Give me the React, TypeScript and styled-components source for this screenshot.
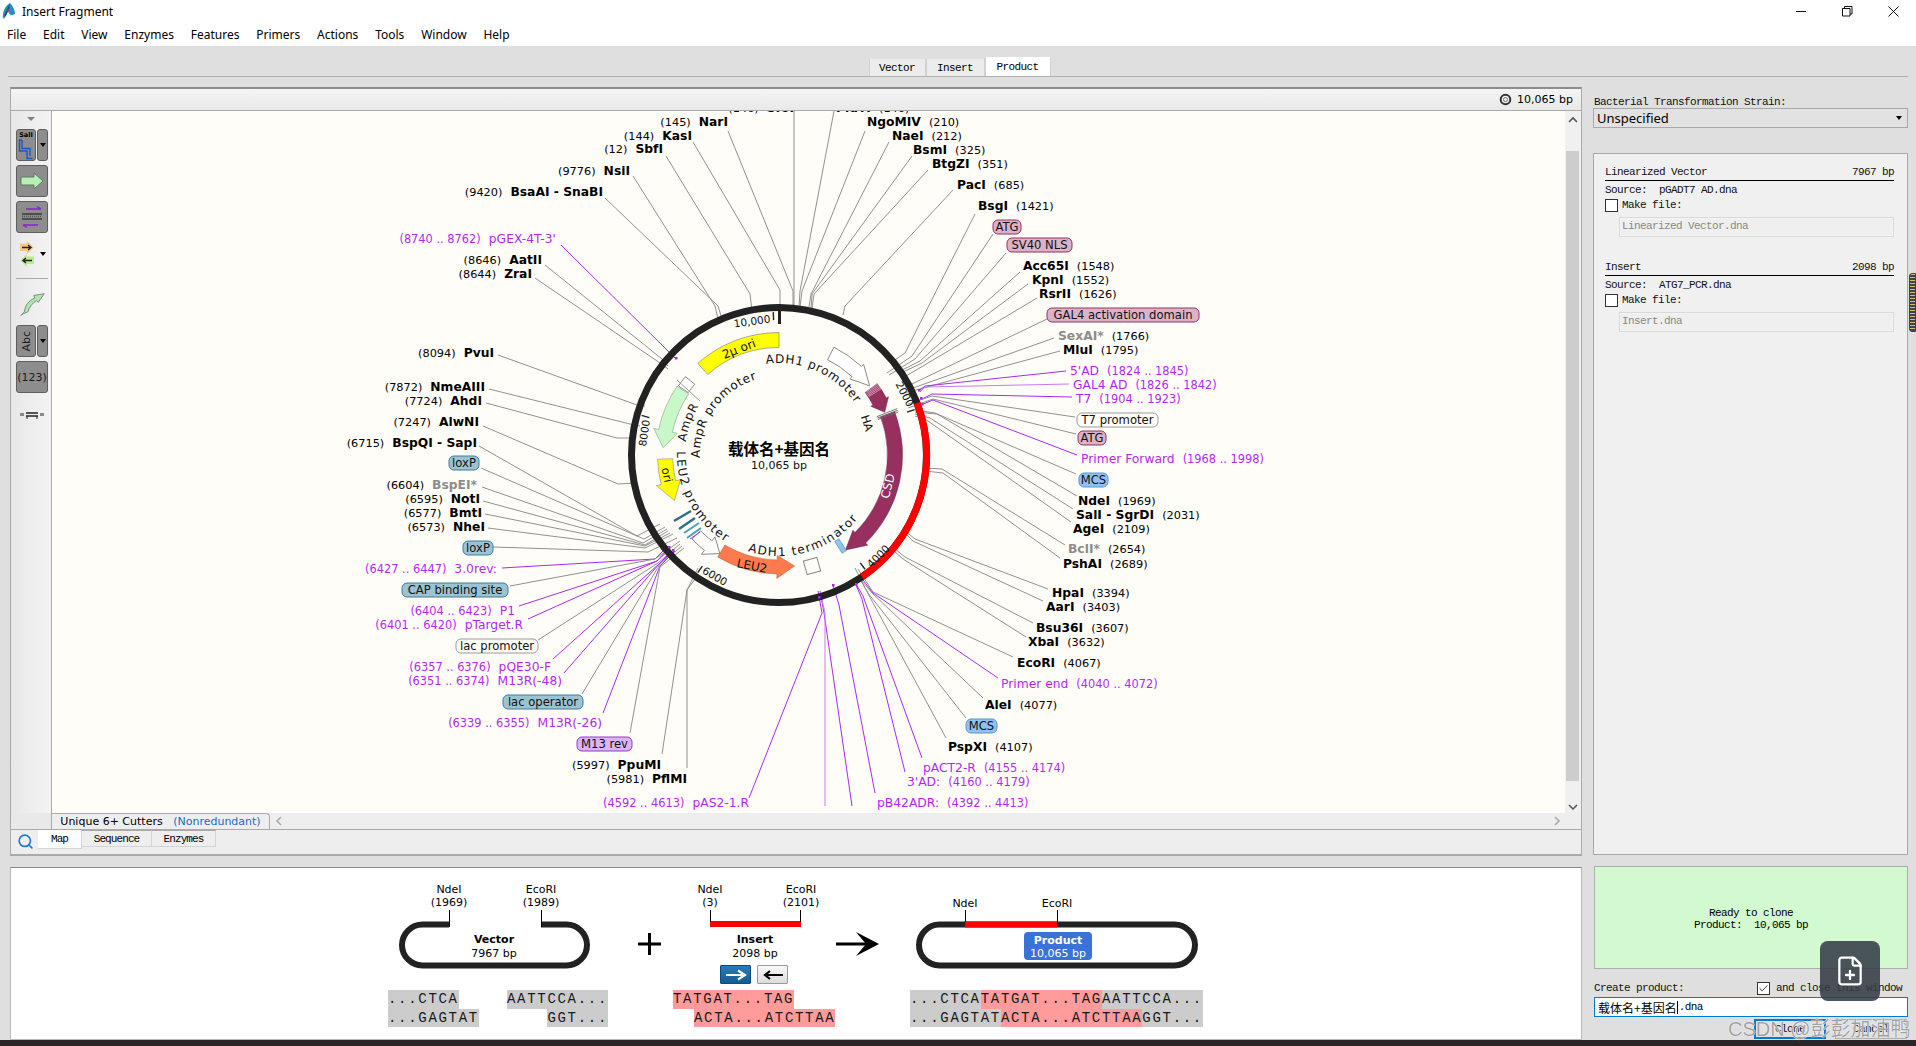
import React from 'react';
import styled, { createGlobalStyle } from 'styled-components';
import { Check, FilePlus, Search } from 'lucide-react';

const UI = `"Noto Sans", "Liberation Sans", sans-serif`;
const MAP = `"DejaVu Sans", "Noto Sans CJK SC", sans-serif`;
const BITMAP = `"Liberation Mono", "Noto Sans CJK SC", monospace`;

const Global = createGlobalStyle`
  html, body { margin: 0; padding: 0; overflow: hidden; background: #dfdfdf; }
  * { box-sizing: border-box; }
`;

const Page = styled.div`
  position: relative; width: 1916px; height: 1046px; overflow: hidden;
  display: flex; flex-direction: column; background: #dfdfdf; font-family: ${UI}; color: #000;
`;
const TitleBar = styled.div`
  height: 23px; background: #fff; display: flex; align-items: center; padding-left: 2px; flex: none;
`;
const TitleText = styled.span`font-size: 12px; margin-left: 6px;`;
const WindowButtons = styled.div`margin-left: auto; display: flex; height: 20px; margin-right: 0;`;
const WindowButton = styled.div`width: 46px; display: flex; align-items: center; justify-content: center;`;
const MenuBar = styled.div`
  height: 23px; background: #fff; display: flex; align-items: center; gap: 16.8px; padding-left: 7px; flex: none; font-size: 12px;
`;
const TabRow = styled.div`
  height: 31px; flex: none; margin: 0 8px; border-bottom: 1px solid #b0b0b0;
  display: flex; justify-content: center; align-items: flex-end; padding-left: 3px;
`;
const TopTab = styled.div<{ $active?: boolean; $w: number }>`
  width: ${p => p.$w}px; height: ${p => (p.$active ? 19 : 17)}px;
  font: 11px ${BITMAP}; letter-spacing: -0.6px; display: flex; align-items: center; justify-content: center;
  background: ${p => (p.$active ? '#fff' : '#ececec')};
  border-right: 1px solid #d2d2d2; border-left: 1px solid #d2d2d2;
`;
const Workspace = styled.div`display: flex; flex: 1; min-height: 0; padding: 10px 8px 0 10px; gap: 11px;`;
const LeftColumn = styled.div`width: 1572px; display: flex; flex-direction: column; flex: none;`;
const RightColumn = styled.div`flex: 1; display: flex; flex-direction: column; min-width: 0;`;
const MapPanel = styled.div`
  height: 769px; flex: none; display: flex; flex-direction: column; background: #eee;
  border-top: 2px solid #8d8d8d; border-left: 1px solid #aaa; border-right: 1px solid #aaa; border-bottom: 2px solid #aaa;
`;
const MapHeader = styled.div`
  height: 22px; flex: none; display: flex; align-items: center; justify-content: flex-end; gap: 5px; padding-right: 8px;
  background: linear-gradient(#f4f4f4, #e9e9e9); border-bottom: 1px solid #aaa;
  font: 11px ${MAP};
`;
const MapBody = styled.div`display: flex; height: 702px; flex: none;`;
const Toolbar = styled.div`
  width: 41px; flex: none; display: flex; flex-direction: column; align-items: flex-start; padding: 6px 0 0 5px;
  background: linear-gradient(90deg, #e8e8e8, #f3f3f3); border-right: 1px solid #aaa;
`;
const MenuCaret = styled.div`
  width: 0; height: 0; margin: 0 0 8px 11px; border-left: 4px solid transparent; border-right: 4px solid transparent; border-top: 4px solid #808080;
`;
const ToolRow = styled.div`display: flex; gap: 1px; margin-bottom: 4px; align-items: center;`;
const ToolButton = styled.div<{ $w?: number }>`
  width: ${p => p.$w ?? 32}px; height: 32px; flex: none; background: #8d8d8d; border: 1px solid #5f5f5f; border-radius: 3px;
  display: flex; align-items: center; justify-content: center; font: 11px ${MAP}; color: #1c1c1c;
`;
const SideCaret = styled.div`
  width: 0; height: 0; border-left: 3px solid transparent; border-right: 3px solid transparent; border-top: 4px solid #000;
`;
const VerticalText = styled.span`writing-mode: vertical-rl; transform: rotate(180deg); font: 11px ${MAP};`;
const ToolSeparator = styled.div`width: 32px; height: 1px; background: #aaa; margin: 11px 0 10px;`;
const PlainTool = styled.div`display: flex; align-items: center; gap: 5px; margin: 4px 0 0;`;
const Canvas = styled.svg`flex: none; width: 1513px; height: 702px; display: block; background: #fffdf7;`;
const VScroll = styled.div`flex: 1; display: flex; flex-direction: column; align-items: center; background: #f0f0f0;`;
const VThumb = styled.div`width: 13px; height: 631px; margin: 25px 2px 20px 0; background: #cdcdcd;`;
const TabStrip = styled.div`height: 17px; flex: none; display: flex; border-bottom: 1px solid #aaa; background: #eee;`;
const StripSpacer = styled.div`width: 41px; flex: none; border-right: 1px solid #aaa; background: #e9e9e9;`;
const CutterTab = styled.div`
  width: 218px; flex: none; display: flex; align-items: center; justify-content: center; gap: 7px; font: 11px ${MAP};
  border: 1px solid #aaa; border-left: none; border-bottom: none; border-top-right-radius: 4px; white-space: pre;
`;
const Blue = styled.span`color: #2469c8;`;
const HScroll = styled.div`flex: 1; display: flex; align-items: center; justify-content: space-between; padding: 0 20px 0 5px;`;
const ViewTabs = styled.div`flex: 1; display: flex; align-items: flex-start; padding-left: 6px; background: #eee;`;
const ViewTabIcon = styled.div`width: 21px; height: 20px; display: flex; align-items: center; padding-top: 2px;`;
const ViewTab = styled.div<{ $active?: boolean; $w: number }>`
  width: ${p => p.$w}px; height: ${p => (p.$active ? 19 : 17)}px; flex: none;
  display: flex; align-items: center; justify-content: center;
  font: 11px ${BITMAP}; letter-spacing: -0.9px;
  background: ${p => (p.$active ? '#fff' : '#eee')};
  border-right: 1px solid #d4d4d4; border-bottom: 1px solid #d4d4d4; border-top: ${p => (p.$active ? 'none' : '1px solid #aaa')};
`;
const CloningPanel = styled.div`
  margin-top: 11px; height: 173px; flex: none; background: #fff; border: 1px solid #b8b8b8; border-top-color: #888;
  padding: 12px 0 0 377px; display: grid; grid-template-columns: 220px 65px 162px 75px 292px; align-items: start;
`;
const CloneColumn = styled.div`display: flex; flex-direction: column;`;
const Schematic = styled.svg<{ $w: number; $h: number }>`width: ${p => p.$w}px; height: ${p => p.$h}px; display: block; overflow: visible;`;
const SchematicLabel = styled.text<{ $bold?: boolean; $light?: boolean }>`
  font: ${p => (p.$bold ? 'bold ' : '')}11px ${MAP}; text-anchor: middle; fill: ${p => (p.$light ? '#fff' : '#000')};
`;
const OrientButtons = styled.div`display: flex; gap: 6px; justify-content: center; height: 20px; margin-bottom: 5px;`;
const OrientButton = styled.div<{ $on?: boolean }>`
  width: 31px; height: 19px; display: flex; align-items: center; justify-content: center; border-radius: 1px;
  background: ${p => (p.$on ? 'linear-gradient(#2a7ab8, #125c94)' : 'linear-gradient(#f8f8f8, #dcdcdc)')};
  border: 1px solid ${p => (p.$on ? '#0f4c7c' : '#9a9a9a')};
`;
const SeqBlock = styled.div`display: flex; flex-direction: column; margin-top: 5px;`;
const InsertSeq = styled(SeqBlock)`margin-top: 0;`;
const SeqRow = styled.div<{ $split?: boolean; $indent?: number }>`
  display: flex; height: 18.5px; justify-content: ${p => (p.$split ? 'space-between' : 'flex-start')}; margin-left: ${p => p.$indent ?? 0}px;
`;
const SeqChunk = styled.span<{ $red?: boolean }>`
  font: 14px/18.5px "Liberation Mono", monospace; letter-spacing: 1.7px; white-space: pre;
  background: ${p => (p.$red ? '#ff9b9b' : '#cccccc')}; color: #1a1a1a;
`;
const BitmapLabel = styled.div`font: 11px ${BITMAP}; letter-spacing: -0.6px; white-space: pre; color: #111;`;
const StrainLabel = styled(BitmapLabel)`height: 21px; padding: 9px 0 0 1px; line-height: 12px;`;
const StrainSelect = styled.div`
  height: 20px; flex: none; border: 1px solid #a8a8a8; display: flex; align-items: center; justify-content: space-between;
  padding: 0 5px 0 3px; font-size: 13px; background: #e2e2e2;
`;
const SourcesBox = styled.div`
  height: 702px; flex: none; margin-top: 25px; border: 1px solid #a8a8a8; background: #f0f0f0; padding: 11px 13px 0 11px;
`;
const SourceHead = styled(BitmapLabel)`
  display: flex; justify-content: space-between; height: 16px; line-height: 15px; border-bottom: 1px solid #000;
`;
const SourceLine = styled(BitmapLabel)`height: 16px; line-height: 18px;`;
const MakeFile = styled(BitmapLabel)`display: flex; align-items: center; gap: 4px; height: 16px;`;
const CheckBox = styled.div`
  width: 13px; height: 13px; flex: none; background: #fff; border: 1px solid #333; display: flex; align-items: center; justify-content: center;
`;
const FileField = styled(BitmapLabel)`
  height: 20px; margin: 4px 0 23px 14px; border: 1px solid #d9d9d9; background: #efefef; padding-left: 2px; line-height: 17px; color: #888;
  box-shadow: inset 0 0 0 1px #f4f4f4;
`;
const ReadyBox = styled.div`
  margin-top: 11px; height: 103px; flex: none; background: #d2f9d0; border: 1px solid #adadad; padding-top: 2px;
  display: flex; flex-direction: column; align-items: center; justify-content: center; margin-left: 1px;
`;
const ReadyLine = styled(BitmapLabel)`line-height: 12px; color: #000;`;
const CreateRow = styled(BitmapLabel)`
  display: flex; align-items: center; justify-content: space-between; height: 16px; margin: 11px 0 1px 1px; padding-right: 6px;
`;
const CloseOption = styled.div`display: flex; align-items: center; gap: 6px;`;
const NameField = styled.div`
  height: 20px; flex: none; margin-left: 1px; background: #fff; border: 1px solid #0078d7; display: flex; align-items: center; padding-left: 3px;
  font: 12px "Noto Sans CJK SC", sans-serif;
`;
const FieldExt = styled.span`font: 11px ${BITMAP}; letter-spacing: -0.6px; margin-left: 1px;`;
const Caret = styled.span`width: 1px; height: 13px; background: #000; margin-left: 0;`;
const DialogButtons = styled.div`display: flex; justify-content: flex-end; gap: 9px; margin-top: 2px; padding-right: 1px;`;
const DialogButton = styled(BitmapLabel)<{ $primary?: boolean }>`
  width: 72px; height: 20px; display: flex; align-items: center; justify-content: center;
  border: ${p => (p.$primary ? '2px solid #0078d7' : '1px solid #adadad')}; background: #e1e1e1;
`;
const Taskbar = styled.div`height: 6px; flex: none; background: #2a2529; margin-top: auto;`;
const FloatingAction = styled.div`
  position: absolute; left: 1820px; top: 941px; width: 60px; height: 60px; border-radius: 8px; background: rgba(52, 60, 70, 0.88);
  display: flex; align-items: center; justify-content: center; color: #fff;
`;
const Watermark = styled.div`
  position: absolute; left: 1728px; top: 1013px; font: 20px "Liberation Sans", "Noto Sans CJK SC", sans-serif;
  color: rgba(125, 125, 125, 0.72); white-space: nowrap; text-shadow: 0 0 1px #fff, 0 0 1px #fff;
`;
const EdgeWidget = styled.div`
  position: absolute; left: 1909px; top: 273px; width: 7px; height: 59px; border-radius: 3px 0 0 3px; border: 1px solid #3a4350;
  background: repeating-linear-gradient(#d8c05a 0 1px, #3a4350 1px 3px);
`;

const Enzyme = styled.text<{ $end?: boolean }>`
  font: 11.3px ${MAP}; fill: #000; text-anchor: ${p => (p.$end ? 'end' : 'start')};
`;
const Bold = styled.tspan<{ $grey?: boolean }>`font-weight: bold; font-size: 12.3px; fill: ${p => (p.$grey ? '#8c8c8c' : '#000')};`;
const Primer = styled.text<{ $end?: boolean }>`
  font: 11.4px ${MAP}; fill: #b428f5; text-anchor: ${p => (p.$end ? 'end' : 'start')};
`;
const PrimerName = styled.tspan`font-size: 12.3px;`;
const FeatureBox = styled.rect<{ $fill: string; $edge: string }>`fill: ${p => p.$fill}; stroke: ${p => p.$edge}; stroke-width: 1;`;
const FeatureText = styled.text`font: 11.6px ${MAP}; fill: #111; text-anchor: middle;`;
const RingText = styled.text<{ $fill?: string; $size?: number }>`
  font: ${p => p.$size ?? 10.5}px ${MAP}; fill: ${p => p.$fill ?? '#111'}; text-anchor: middle;
`;
const ArcText = styled.text<{ $spread?: number }>`font: 12px ${MAP}; fill: #111; letter-spacing: ${p => p.$spread ?? 0.7}px;`;
const PlasmidName = styled.text`font: bold 15.5px "Noto Sans CJK SC", sans-serif; fill: #000; text-anchor: middle;`;
const LeaderLine = styled.polyline<{ $c: string }>`
  fill: none; stroke: ${p => ({ g: '#919191', p: '#a928f5', l: '#c47cf5' } as Record<string, string>)[p.$c]}; stroke-width: 1;
`;
const PrimerTick = styled.rect`fill: #a928f5;`;

const CX = 779, CY = 454;
const pt = (r: number, a: number) => {
  const t = (a * Math.PI) / 180;
  return [CX + r * Math.sin(t), CY - r * Math.cos(t)];
};
const f = (p: number[]) => `${p[0].toFixed(1)} ${p[1].toFixed(1)}`;
const arc = (r: number, a1: number, a2: number) =>
  `M${f(pt(r, a1))} A${r} ${r} 0 ${Math.abs(a2 - a1) > 180 ? 1 : 0} ${a2 > a1 ? 1 : 0} ${f(pt(r, a2))}`;
const arrowPath = (r: number, w: number, hw: number, a1: number, base: number, tip: number) => {
  const s = base > a1 ? 1 : 0;
  const ro = r + w / 2, ri = r - w / 2;
  return `M${f(pt(ro, a1))} A${ro} ${ro} 0 0 ${s} ${f(pt(ro, base))} L${f(pt(r + hw / 2, base))} L${f(pt(r, tip))} L${f(pt(r - hw / 2, base))} L${f(pt(ri, base))} A${ri} ${ri} 0 0 ${1 - s} ${f(pt(ri, a1))} Z`;
};

type Lab = [string, string, number, number, boolean?];
const leftEnzymes: Lab[] = [
  ['SfoI', '146', 794, 108], ['NarI', '145', 728, 122], ['KasI', '144', 692, 136], ['SbfI', '12', 663, 149],
  ['NsiI', '9776', 630, 171], ['BsaAI - SnaBI', '9420', 603, 192], ['AatII', '8646', 542, 260], ['ZraI', '8644', 532, 274],
  ['PvuI', '8094', 494, 353], ['NmeAIII', '7872', 485, 387], ['AhdI', '7724', 482, 401], ['AlwNI', '7247', 479, 422],
  ['BspQI - SapI', '6715', 477, 443], ['BspEI*', '6604', 477, 485, true], ['NotI', '6595', 480, 499], ['BmtI', '6577', 482, 513],
  ['NheI', '6573', 485, 527], ['PpuMI', '5997', 661, 765], ['PflMI', '5981', 687, 779],
];
const rightEnzymes: Lab[] = [
  ['PluTI', '146', 836, 108], ['NgoMIV', '210', 867, 122], ['NaeI', '212', 892, 136], ['BsmI', '325', 913, 150], ['BtgZI', '351', 932, 164],
  ['PacI', '685', 957, 185], ['BsgI', '1421', 978, 206], ['Acc65I', '1548', 1023, 266], ['KpnI', '1552', 1032, 280], ['RsrII', '1626', 1039, 294],
  ['SexAI*', '1766', 1058, 336, true], ['MluI', '1795', 1063, 350], ['NdeI', '1969', 1078, 501], ['SalI - SgrDI', '2031', 1076, 515],
  ['AgeI', '2109', 1073, 529], ['BclI*', '2654', 1068, 549, true], ['PshAI', '2689', 1063, 564], ['HpaI', '3394', 1052, 593], ['AarI', '3403', 1046, 607],
  ['Bsu36I', '3607', 1036, 628], ['XbaI', '3632', 1028, 642], ['EcoRI', '4067', 1017, 663], ['AleI', '4077', 985, 705], ['PspXI', '4107', 948, 747],
];
const leftPrimers: [string, string, number, number][] = [
  ["pGEX-4T-3'", '8740 .. 8762', 556, 239], ['3.0rev:', '6427 .. 6447', 497, 569], ['P1', '6404 .. 6423', 515, 611], ['pTarget.R', '6401 .. 6420', 523, 625],
  ['pQE30-F', '6357 .. 6376', 551, 667], ['M13R(-48)', '6351 .. 6374', 562, 681], ['M13R(-26)', '6339 .. 6355', 602, 723], ['pAS2-1.R', '4592 .. 4613', 749, 803],
];
const rightPrimers: [string, string, number, number][] = [
  ["5'AD", '1824 .. 1845', 1070, 371], ['GAL4 AD', '1826 .. 1842', 1073, 385], ['T7', '1904 .. 1923', 1076, 399], ['Primer Forward', '1968 .. 1998', 1081, 459],
  ['Primer end', '4040 .. 4072', 1001, 684], ['pACT2-R', '4155 .. 4174', 923, 768], ["3'AD:", '4160 .. 4179', 907, 782], ['pB42ADR:', '4392 .. 4413', 877, 803],
];
const PINK = ['#dcb2c8', '#97305f'], TEAL = ['#9cc3d2', '#3a7f96'], PLAIN = ['#fffdf7', '#9a9a9a'], SKY = ['#8fc2f0', '#5a96d0'], LILAC = ['#dcb4f5', '#8a3fc0'];
const features: [string, number, number, number, string[]][] = [
  ['ATG', 993, 1021, 227, PINK], ['SV40 NLS', 1007, 1072, 245, PINK], ['GAL4 activation domain', 1047, 1199, 315, PINK],
  ['T7 promoter', 1077, 1158, 420, PLAIN], ['ATG', 1078, 1106, 438, PINK], ['MCS', 1079, 1108, 480, SKY], ['MCS', 966, 997, 726, SKY],
  ['loxP', 449, 479, 463, TEAL], ['loxP', 463, 493, 548, TEAL], ['CAP binding site', 402, 508, 590, TEAL], ['lac promoter', 456, 538, 646, PLAIN],
  ['lac operator', 503, 583, 702, TEAL], ['M13 rev', 577, 632, 744, LILAC],
];
const leaders: [string, number[]][] = [
  ['g', [794, 110, 794, 290, 794, 310]], ['g', [834, 110, 800, 290, 799, 306]], ['g', [865, 130, 802, 290, 800, 306]],
  ['g', [889, 141, 811, 293, 809, 306]], ['g', [912, 155, 812, 293, 811, 308]], ['g', [928, 169, 814, 293, 812, 308]],
  ['g', [953, 189, 845, 305, 843, 314]], ['g', [975, 213, 905, 352, 895, 359]], ['g', [993, 233, 912, 355, 887, 372]],
  ['g', [1006, 252, 915, 358, 889, 374]], ['g', [1020, 271, 920, 360, 902, 369]], ['g', [1028, 283, 922, 362, 903, 371]],
  ['g', [1037, 297, 923, 365, 906, 375]], ['g', [1047, 318, 914, 382, 905, 386]], ['g', [1054, 337, 913, 387, 906, 392]],
  ['g', [1060, 350, 912, 390, 906, 395]], ['p', [1066, 370, 925, 385, 919, 390]], ['l', [1069, 383, 925, 386, 920, 391]],
  ['p', [1072, 396, 932, 393, 922, 398]], ['g', [1075, 416, 932, 395, 908, 403]], ['g', [1076, 433, 933, 398, 908, 407]],
  ['p', [1077, 454, 933, 399, 923, 403]], ['g', [1076, 473, 935, 412, 915, 409]], ['g', [1077, 495, 937, 413, 915, 411]],
  ['g', [1073, 508, 930, 417, 915, 413]], ['g', [1071, 521, 928, 420, 915, 415]], ['g', [1065, 544, 942, 468, 925, 467]],
  ['g', [1060, 557, 943, 472, 925, 470]], ['g', [1048, 588, 915, 538, 905, 530]], ['g', [1043, 600, 913, 540, 905, 532]],
  ['g', [1033, 622, 905, 556, 895, 548]], ['g', [1026, 636, 903, 558, 894, 550]], ['g', [1013, 656, 873, 591, 858, 568]],
  ['p', [998, 677, 873, 592, 860, 575]], ['g', [983, 697, 872, 592, 862, 580]], ['g', [966, 717, 868, 592, 860, 578]],
  ['g', [946, 737, 865, 587, 855, 567]], ['p', [922, 757, 863, 595, 856, 583]], ['p', [905, 771, 862, 598, 856, 584]],
  ['p', [875, 792, 839, 604, 833, 584]], ['p', [852, 805, 824, 612, 820, 590]], ['l', [825, 805, 825, 612, 820, 590]],
  ['p', [749, 797, 822, 612, 818, 590]], ['g', [728, 130, 793, 290, 793, 310]], ['g', [693, 141, 780, 289, 780, 310]],
  ['g', [666, 155, 750, 293, 752, 310]], ['g', [633, 175, 715, 305, 718, 318]], ['g', [605, 197, 718, 305, 722, 318]],
  ['p', [561, 244, 668, 350, 675, 357]], ['g', [545, 264, 662, 358, 668, 365]], ['g', [535, 277, 660, 362, 668, 368]],
  ['g', [498, 354, 637, 404, 645, 405]], ['g', [489, 388, 630, 423, 640, 425]], ['g', [486, 402, 617, 437, 635, 437]],
  ['g', [483, 425, 618, 483, 636, 482]], ['g', [479, 445, 637, 535, 660, 523]], ['g', [481, 467, 644, 538, 665, 526]],
  ['g', [482, 486, 643, 542, 667, 528]], ['g', [483, 500, 645, 544, 668, 530]], ['g', [485, 513, 645, 545, 670, 532]],
  ['g', [488, 527, 645, 547, 673, 533]], ['g', [493, 546, 648, 551, 677, 537]], ['p', [502, 567, 655, 558, 668, 545]],
  ['g', [510, 585, 655, 558, 680, 540]], ['p', [519, 605, 657, 560, 668, 548]], ['p', [528, 618, 657, 560, 670, 548]],
  ['g', [538, 639, 658, 562, 680, 543]], ['p', [553, 658, 660, 562, 672, 550]], ['p', [564, 672, 660, 562, 674, 550]],
  ['g', [582, 693, 660, 563, 682, 545]], ['p', [603, 712, 660, 565, 675, 550]], ['g', [630, 732, 660, 566, 684, 547]],
  ['g', [662, 753, 687, 589, 695, 578]], ['g', [687, 767, 687, 589, 698, 567]],
];
const stripes = [54.2, 54.9, 55.6, 56.3, 57];
const ringTicks = [357.7, 286.1, 214.6, 143, 71.5];
const primerTicks = [[675, 356], [918, 388], [920, 396], [921, 402], [818, 595], [832, 583], [855, 582], [668, 545], [672, 548]];

const PlasmidMap = () => (
  <Canvas viewBox="52 110 1513 702">
    <defs>
      <path id="adhp" d={arc(92, -8, 60)} />
      <path id="ampr" d={arc(94, -82, -45)} />
      <path id="amprp" d={arc(79, -92, -10)} />
      <path id="leup" d={arc(102, 272, 190)} />
      <path id="adht" d={arc(101, 198, 120)} />
    </defs>
    {leaders.map(([c, p], i) => (
      <LeaderLine key={i} $c={c} points={p.join(' ')} />
    ))}
    <circle cx={CX} cy={CY} r={147.5} fill="none" stroke="#222" strokeWidth={7} />
    <path d={arc(147.5, 69.4, 145.7)} fill="none" stroke="#f00" strokeWidth={7} />
    {primerTicks.map(([x, y]) => <PrimerTick key={x + '-' + y} x={x} y={y} width={2.5} height={2.5} />)}
    {ringTicks.map(a => {
      const p1 = pt(143, a), p2 = pt(135, a);
      return <line key={a} x1={p1[0]} y1={p1[1]} x2={p2[0]} y2={p2[1]} stroke="#222" strokeWidth={1.4} />;
    })}
    <line x1={CX + 0.5} y1={310} x2={CX + 0.5} y2={323} stroke="#222" strokeWidth={3} />
    <RingText x={752} y={324} transform="rotate(-8 752 320)">10,000</RingText>
    <RingText x={644} y={436} transform="rotate(-82 644 432)">8000</RingText>
    <RingText x={715} y={579} transform="rotate(30 715 575)">6000</RingText>
    <RingText x={878} y={559} transform="rotate(-45 878 555)">4000</RingText>
    <RingText x={905} y={397} transform="rotate(62 905 393)">2000</RingText>

    <path d={arrowPath(115, 15, 15, 0, -41.5, -41.5)} fill="#ffff00" stroke="#777" strokeWidth={0.6} />
    <path d={arrowPath(114, 14, 20, 27, 43, 52.6)} fill="#fff" stroke="#8a8a8a" />
    <path d={arrowPath(114, 15, 20, 54, 62, 68)} fill="#97305f" stroke="#6d2245" strokeWidth={0.5} />
    {stripes.map(a => {
      const p1 = pt(107, a), p2 = pt(122, a);
      return <line key={a} x1={p1[0]} y1={p1[1]} x2={p2[0]} y2={p2[1]} stroke="#fff" strokeWidth={0.5} />;
    })}
    <path d={arrowPath(116, 15, 21, 69.5, 135.5, 145)} fill="#97305f" stroke="#6d2245" strokeWidth={0.5} />
    {[68.6, 69.4, 70.2].map(a => {
      const p1 = pt(105, a), p2 = pt(127, a);
      return <line key={a} x1={p1[0]} y1={p1[1]} x2={p2[0]} y2={p2[1]} stroke="#666" strokeWidth={0.9} />;
    })}
    <rect x={838} y={538} width={5} height={14} fill="#8cc4ee" stroke="#5a8cb8" strokeWidth={0.6} transform="rotate(-32 840.5 545)" />
    <rect x={805} y={558} width={14} height={14} fill="#fffdf7" stroke="#888" transform="rotate(-16 812 565)" />
    <path d={arrowPath(112, 14, 23, 211, 181, 172)} fill="#ff7a4d" stroke="#a85a3a" strokeWidth={0.5} />
    <path d={arrowPath(115, 12, 22, 226, 218, 211)} fill="#fff" stroke="#8a8a8a" />
    <path d={arrowPath(116, 14, 24, -56, -78, -86.4)} fill="#c8f7c8" stroke="#8aa08a" strokeWidth={0.6} />
    <path d={arrowPath(116, 12, 12, -50, -55.5, -55.5)} fill="#fff" stroke="#8a8a8a" />
    <line x1={677} y1={379} x2={700} y2={400} stroke="#999" />
    <path d={arrowPath(114, 15, 25, -92, -104, -113.5)} fill="#ffff00" stroke="#888" strokeWidth={0.6} />
    <line x1={674} y1={520} x2={691} y2={510} stroke="#2e6f88" strokeWidth={2.5} />
    <line x1={679} y1={528} x2={695} y2={517} stroke="#2e6f88" strokeWidth={2.5} />
    <line x1={684} y1={532} x2={699} y2={522} stroke="#4aa0b8" strokeWidth={2} />
    <line x1={687} y1={537} x2={701} y2={527} stroke="#4aa0b8" strokeWidth={2} />
    <line x1={690} y1={538} x2={700} y2={531} stroke="#a928f5" strokeWidth={1} />

    <RingText $size={12} x={739} y={352} transform="rotate(-21 739 348)">2µ ori</RingText>
    <RingText $size={12} $fill="#fff" x={888} y={489} transform="rotate(-76 888 485)">CSD</RingText>
    <RingText $size={11.5} x={667} y={478} transform="rotate(78 667 474)">ori</RingText>
    <RingText $size={12} x={752} y={569} transform="rotate(11 752 565)">LEU2</RingText>
    <RingText $size={11.5} x={867} y={426} transform="rotate(72 867 422)">HA</RingText>
    <ArcText><textPath href="#adhp">ADH1 promoter</textPath></ArcText>
    <ArcText><textPath href="#ampr">AmpR</textPath></ArcText>
    <ArcText><textPath href="#amprp">AmpR promoter</textPath></ArcText>
    <ArcText $spread={1.4}><textPath href="#leup">LEU2 promoter</textPath></ArcText>
    <ArcText $spread={1.4}><textPath href="#adht">ADH1 terminator</textPath></ArcText>
    <PlasmidName x={CX} y={454}>载体名+基因名</PlasmidName>
    <RingText $size={11} x={CX} y={468}>10,065 bp</RingText>

    {leftEnzymes.map(([n, p, x, y, g]) => (
      <Enzyme key={n} $end x={x} y={y + 3}>({p})<Bold $grey={g} dx={8}>{n}</Bold></Enzyme>
    ))}
    {rightEnzymes.map(([n, p, x, y, g]) => (
      <Enzyme key={n} x={x} y={y + 3}><Bold $grey={g}>{n}</Bold><tspan dx={8}>({p})</tspan></Enzyme>
    ))}
    {leftPrimers.map(([n, p, x, y]) => (
      <Primer key={n} $end x={x} y={y + 3}>({p})<PrimerName dx={8}>{n}</PrimerName></Primer>
    ))}
    {rightPrimers.map(([n, p, x, y]) => (
      <Primer key={n} x={x} y={y + 3}><PrimerName>{n}</PrimerName><tspan dx={8}>({p})</tspan></Primer>
    ))}
    {features.map(([n, x1, x2, y, c]) => (
      <g key={n + y}>
        <FeatureBox x={x1} y={y - 8} width={x2 - x1} height={14} rx={5} $fill={c[0]} $edge={c[1]} />
        <FeatureText x={(x1 + x2) / 2} y={y + 3}>{n}</FeatureText>
      </g>
    ))}
  </Canvas>
);

const Tick = ({ x, top, bottom }: { x: number; top: number; bottom: number }) => (
  <line x1={x} x2={x} y1={top} y2={bottom} stroke="#000" strokeWidth={1} />
);
const Stadium = ({ x1, x2 }: { x1: number; x2: number }) => (
  <rect x={x1} y={924.5} width={x2 - x1} height={41} rx={20.5} fill="#fff" stroke="#222" strokeWidth={6} />
);

const CloningDiagram = () => (
  <CloningPanel>
    <CloneColumn>
      <Schematic $w={220} $h={105} viewBox="388 880 220 105">
        <Stadium x1={402} x2={587} />
        <rect x={449} y={915} width={92} height={15} fill="#fff" />
        <Tick x={449.5} top={910} bottom={927} />
        <Tick x={541.5} top={910} bottom={927} />
        <SchematicLabel x={449} y={893}>NdeI</SchematicLabel>
        <SchematicLabel x={449} y={906}>(1969)</SchematicLabel>
        <SchematicLabel x={541} y={893}>EcoRI</SchematicLabel>
        <SchematicLabel x={541} y={906}>(1989)</SchematicLabel>
        <SchematicLabel $bold x={494} y={943}>Vector</SchematicLabel>
        <SchematicLabel x={494} y={957}>7967 bp</SchematicLabel>
      </Schematic>
      <SeqBlock>
        <SeqRow $split><SeqChunk>...CTCA</SeqChunk><SeqChunk>AATTCCA...</SeqChunk></SeqRow>
        <SeqRow $split><SeqChunk>...GAGTAT</SeqChunk><SeqChunk>GGT...</SeqChunk></SeqRow>
      </SeqBlock>
    </CloneColumn>
    <Schematic $w={65} $h={105} viewBox="608 880 65 105">
      <path d="M638 944H661M649.5 933V955" stroke="#000" strokeWidth={3} fill="none" />
    </Schematic>
    <CloneColumn>
      <Schematic $w={162} $h={85} viewBox="673 880 162 85">
        <rect x={710} y={921} width={91} height={6} fill="#f00" />
        <Tick x={710.5} top={910} bottom={922} />
        <Tick x={800.5} top={910} bottom={922} />
        <SchematicLabel x={710} y={893}>NdeI</SchematicLabel>
        <SchematicLabel x={710} y={906}>(3)</SchematicLabel>
        <SchematicLabel x={801} y={893}>EcoRI</SchematicLabel>
        <SchematicLabel x={801} y={906}>(2101)</SchematicLabel>
        <SchematicLabel $bold x={755} y={943}>Insert</SchematicLabel>
        <SchematicLabel x={755} y={957}>2098 bp</SchematicLabel>
      </Schematic>
      <OrientButtons>
        <OrientButton $on>
          <svg width="22" height="12" viewBox="0 0 22 12"><path d="M1 6H18M13 1.5L20 6L13 10.5" fill="none" stroke="#fff" strokeWidth="2.2" /></svg>
        </OrientButton>
        <OrientButton>
          <svg width="22" height="12" viewBox="0 0 22 12"><path d="M21 6H5M8 2L3 6L8 10" fill="none" stroke="#000" strokeWidth="2.2" /></svg>
        </OrientButton>
      </OrientButtons>
      <InsertSeq>
        <SeqRow><SeqChunk $red>TATGAT...TAG</SeqChunk></SeqRow>
        <SeqRow $indent={21}><SeqChunk $red>ACTA...ATCTTAA</SeqChunk></SeqRow>
      </InsertSeq>
    </CloneColumn>
    <Schematic $w={75} $h={105} viewBox="835 880 75 105">
      <path d="M836 944H870" stroke="#000" strokeWidth={3} />
      <path d="M856 932L879 944L856 956L866 944Z" fill="#000" />
    </Schematic>
    <CloneColumn>
      <Schematic $w={292} $h={105} viewBox="910 880 292 105">
        <Stadium x1={919} x2={1195} />
        <rect x={965} y={921.5} width={92} height={6} fill="#f00" />
        <Tick x={965.5} top={910} bottom={922} />
        <Tick x={1057.5} top={910} bottom={922} />
        <SchematicLabel x={965} y={907}>NdeI</SchematicLabel>
        <SchematicLabel x={1057} y={907}>EcoRI</SchematicLabel>
        <rect x={1024} y={932} width={68} height={28} rx={4} fill="#3a72d8" />
        <SchematicLabel $bold $light x={1058} y={944}>Product</SchematicLabel>
        <SchematicLabel $light x={1058} y={957}>10,065 bp</SchematicLabel>
      </Schematic>
      <SeqBlock>
        <SeqRow><SeqChunk>...CTCA</SeqChunk><SeqChunk $red>TATGAT...TAG</SeqChunk><SeqChunk>AATTCCA...</SeqChunk></SeqRow>
        <SeqRow><SeqChunk>...GAGTAT</SeqChunk><SeqChunk $red>ACTA...ATCTTAA</SeqChunk><SeqChunk>GGT...</SeqChunk></SeqRow>
      </SeqBlock>
    </CloneColumn>
  </CloningPanel>
);

const MapToolbar = () => (
  <Toolbar>
    <MenuCaret />
    <ToolRow>
      <ToolButton $w={20}>
        <svg width="18" height="30" viewBox="0 0 18 30">
          <text x="9" y="7" textAnchor="middle" fontSize="6.5" fontWeight="bold" fontFamily="DejaVu Sans">SalI</text>
          <path d="M2.5 10V21H10V28.5H15.5M5 10V18.5H13V26" fill="none" stroke="#1e57c0" strokeWidth="1.4" />
          <path d="M2 10H5" stroke="#1e57c0" strokeWidth="1.4" />
        </svg>
      </ToolButton>
      <ToolButton $w={11}><SideCaret /></ToolButton>
    </ToolRow>
    <ToolRow>
      <ToolButton>
        <svg width="26" height="20" viewBox="0 0 26 20"><path d="M2 6H15V2L24 10L15 18V14H2Z" fill="#b6f0b6" stroke="#5d7a5d" /></svg>
      </ToolButton>
    </ToolRow>
    <ToolRow>
      <ToolButton>
        <svg width="24" height="24" viewBox="0 0 24 24">
          <path d="M6 4H21M17 1.5L21 4M3 20H18M7 22.5L3 20" fill="none" stroke="#8a1ee0" strokeWidth="1.3" />
          <path d="M2 9H22M2 14H22" stroke="#111" strokeWidth="1.1" />
          <path d="M2 11.5H22" stroke="#555" strokeWidth="1.4" strokeDasharray="1 1" />
        </svg>
      </ToolButton>
    </ToolRow>
    <PlainTool>
      <svg width="16" height="26" viewBox="0 0 16 26" style={{ marginLeft: 3 }}>
        <path d="M1 2.5H8V0L15 6.5L8 13V10H1Z" fill="#fbc878" />
        <path d="M3 6.5H12M9 4L12 6.5L9 9" fill="none" stroke="#222" strokeWidth="1.4" />
        <path d="M15 15.5H8V13L1 19.5L8 26V23H15Z" fill="#b4f08c" />
        <path d="M13 19.5H4M7 17L4 19.5L7 22" fill="none" stroke="#222" strokeWidth="1.4" />
      </svg>
      <SideCaret />
    </PlainTool>
    <ToolSeparator />
    <PlainTool>
      <svg width="26" height="28" viewBox="0 0 30 28" style={{ margin: '-2px 0 6px 4px' }}>
        <path d="M1 26L5 22C6 14 10 9 17 6L16 3L28 1L21 11L19 9C14 12 11 16 9 22L4 24Z" fill="#aee8b0" stroke="#777" strokeWidth="1" />
      </svg>
    </PlainTool>
    <ToolRow>
      <ToolButton $w={20}><VerticalText>Abc</VerticalText></ToolButton>
      <ToolButton $w={11}><SideCaret /></ToolButton>
    </ToolRow>
    <ToolRow>
      <ToolButton>(123)</ToolButton>
    </ToolRow>
    <PlainTool>
      <svg width="32" height="10" viewBox="0 0 32 10" style={{ marginTop: 10 }}>
        <path d="M5 2V5M7 2V5M25 2V5M27 2V5" stroke="#222" strokeWidth="1" />
        <path d="M10 2H22M10 5H22" stroke="#222" strokeWidth="1.4" />
        <path d="M11 5V8M21 5V8" stroke="#222" strokeWidth="1" />
      </svg>
    </PlainTool>
  </Toolbar>
);

const SourceBlock = ({ title, bp, source, file }: { title: string; bp: string; source: string; file: string }) => (
  <>
    <SourceHead><span>{title}</span><span>{bp} bp</span></SourceHead>
    <SourceLine>Source:  {source}</SourceLine>
    <MakeFile><CheckBox />Make file:</MakeFile>
    <FileField>{file}</FileField>
  </>
);

export default function App() {
  return (
    <Page>
      <Global />
      <TitleBar>
        <svg width="14" height="17" viewBox="0 0 14 17">
          <path d="M8 0C3 3 0 9 1 16C3 13 5 12 6 8C7 12 9 13 13 11C13 7 11 3 8 0Z" fill="#2a8cc0" />
          <path d="M2 16C3 10 5 6 8 1C7 6 5 11 2 16Z" fill="#123c5c" />
          <circle cx="6" cy="7" r="1.3" fill="#c83030" />
        </svg>
        <TitleText>Insert Fragment</TitleText>
        <WindowButtons>
          <WindowButton><svg width="11" height="11" viewBox="0 0 11 11"><path d="M0 5.5H10" stroke="#111" /></svg></WindowButton>
          <WindowButton><svg width="11" height="11" viewBox="0 0 11 11"><path d="M.5 2.5H8V10H.5ZM2.5 2.5V.5H10V8H8" fill="none" stroke="#111" /></svg></WindowButton>
          <WindowButton><svg width="11" height="11" viewBox="0 0 11 11"><path d="M.5.5L10.5 10.5M10.5.5L.5 10.5" stroke="#111" /></svg></WindowButton>
        </WindowButtons>
      </TitleBar>
      <MenuBar>
        {['File', 'Edit', 'View', 'Enzymes', 'Features', 'Primers', 'Actions', 'Tools', 'Window', 'Help'].map(m => <span key={m}>{m}</span>)}
      </MenuBar>
      <TabRow>
        <TopTab $w={57}>Vector</TopTab>
        <TopTab $w={59}>Insert</TopTab>
        <TopTab $active $w={66}>Product</TopTab>
      </TabRow>
      <Workspace>
        <LeftColumn>
          <MapPanel>
            <MapHeader>
              <svg width="13" height="13" viewBox="0 0 13 13"><circle cx="6.5" cy="6.5" r="4.8" fill="none" stroke="#333" strokeWidth="2" /><circle cx="6.5" cy="6.5" r="2" fill="none" stroke="#777" /></svg>
              <span>10,065 bp</span>
            </MapHeader>
            <MapBody>
              <MapToolbar />
              <PlasmidMap />
              <VScroll>
                <svg width="12" height="12" viewBox="0 0 12 12" style={{ marginTop: 3 }}><path d="M2 8L6 4L10 8" fill="none" stroke="#555" strokeWidth="1.6" /></svg>
                <VThumb />
                <svg width="12" height="12" viewBox="0 0 12 12"><path d="M2 4L6 8L10 4" fill="none" stroke="#555" strokeWidth="1.6" /></svg>
              </VScroll>
            </MapBody>
            <TabStrip>
              <StripSpacer />
              <CutterTab>Unique 6+ Cutters <Blue>(Nonredundant)</Blue></CutterTab>
              <HScroll>
                <svg width="8" height="10" viewBox="0 0 8 10"><path d="M6 1L2 5L6 9" fill="none" stroke="#aaa" strokeWidth="1.6" /></svg>
                <svg width="8" height="10" viewBox="0 0 8 10"><path d="M2 1L6 5L2 9" fill="none" stroke="#aaa" strokeWidth="1.6" /></svg>
              </HScroll>
            </TabStrip>
            <ViewTabs>
              <ViewTabIcon><Search size={17} color="#2a78c8" strokeWidth={2.4} /></ViewTabIcon>
              <ViewTab $active $w={44}>Map</ViewTab>
              <ViewTab $w={70}>Sequence</ViewTab>
              <ViewTab $w={64}>Enzymes</ViewTab>
            </ViewTabs>
          </MapPanel>
          <CloningDiagram />
        </LeftColumn>
        <RightColumn>
          <StrainLabel>Bacterial Transformation Strain:</StrainLabel>
          <StrainSelect>
            <span>Unspecified</span>
            <SideCaret />
          </StrainSelect>
          <SourcesBox>
            <SourceBlock title="Linearized Vector" bp="7967" source="pGADT7 AD.dna" file="Linearized Vector.dna" />
            <SourceBlock title="Insert" bp="2098" source="ATG7_PCR.dna" file="Insert.dna" />
          </SourcesBox>
          <ReadyBox>
            <ReadyLine>Ready to clone</ReadyLine>
            <ReadyLine>Product:  10,065 bp</ReadyLine>
          </ReadyBox>
          <CreateRow>
            <span>Create product:</span>
            <CloseOption>
              <CheckBox><Check size={11} strokeWidth={2} color="#222" /></CheckBox>
              <span>and close this window</span>
            </CloseOption>
          </CreateRow>
          <NameField>载体名+基因名<Caret /><FieldExt>.dna</FieldExt></NameField>
          <DialogButtons>
            <DialogButton $primary>Clone</DialogButton>
            <DialogButton>Cancel</DialogButton>
          </DialogButtons>
        </RightColumn>
      </Workspace>
      <Taskbar />
      <EdgeWidget />
      <FloatingAction><FilePlus size={32} strokeWidth={1.7} /></FloatingAction>
      <Watermark>CSDN @彭彭加油鸭</Watermark>
    </Page>
  );
}
